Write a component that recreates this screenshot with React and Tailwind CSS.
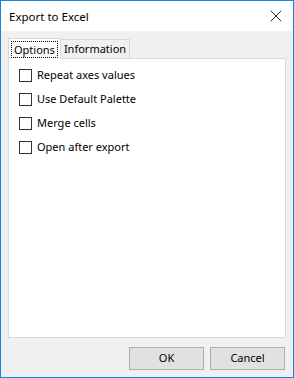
import { X } from "lucide-react";

const options = ["Repeat axes values", "Use Default Palette", "Merge cells", "Open after export"];

function Checkbox({ label }) {
  return (
    <label className="flex h-[24px] items-center gap-[5px]">
      <span className="h-[13px] w-[13px] shrink-0 border border-[#333333] bg-white" />
      <span>{label}</span>
    </label>
  );
}

export default function App() {
  return (
    <div
      className="flex h-[378px] w-[294px] flex-col border border-[#1883d7] bg-[#f0f0f0] text-[11px] text-black"
      style={{ fontFamily: '"Segoe UI", "Noto Sans", sans-serif' }}
    >
      <div className="flex h-[30px] shrink-0 items-center justify-between bg-white pl-[8px] pr-[7px]">
        <span className="pt-[1px] text-[11.5px]">Export to Excel</span>
        <X size={20} strokeWidth={1} className="text-black" />
      </div>

      <div className="flex min-h-0 flex-1 flex-col px-[7px] pt-[7px]">
        <div className="flex items-end">
          <div className="relative z-10 -mb-px flex h-[21px] items-center border border-b-0 border-[#d9d9d9] bg-white px-[2px]">
            <span className="border border-dotted border-black px-[2px] leading-[15px]">Options</span>
          </div>
          <div className="flex h-[19px] items-center border border-l-0 border-b-0 border-[#d9d9d9] bg-[#f0f0f0] px-[3px]">
            Information
          </div>
        </div>
        <div className="flex h-[280px] flex-col border border-[#d9d9d9] bg-white px-[10px] pt-[4px]">
          {options.map((o) => (
            <Checkbox key={o} label={o} />
          ))}
        </div>

        <div className="flex justify-end gap-[6px] pr-[1px] pt-[9px]">
          <button className="h-[23px] w-[75px] border border-[#adadad] bg-[#e1e1e1]">OK</button>
          <button className="h-[23px] w-[75px] border border-[#adadad] bg-[#e1e1e1]">Cancel</button>
        </div>
      </div>
    </div>
  );
}
